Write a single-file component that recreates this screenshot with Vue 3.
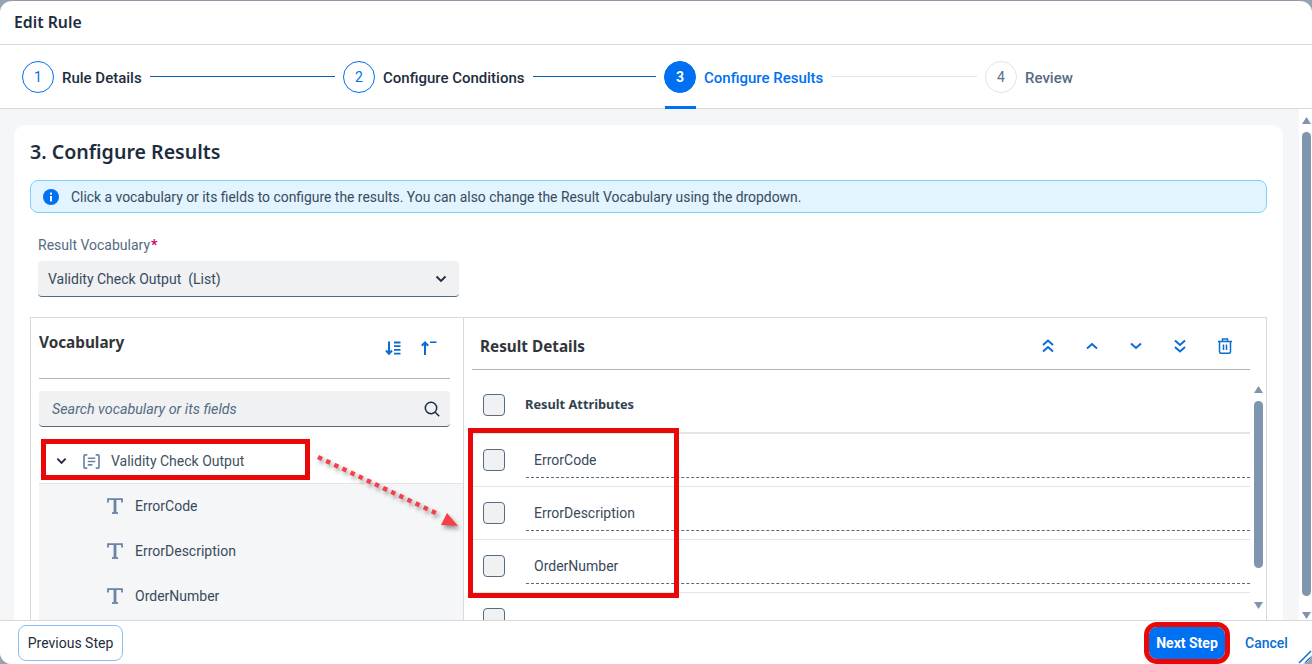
<script setup>
const steps = [
  { n: 1, label: 'Rule Details', state: 'done' },
  { n: 2, label: 'Configure Conditions', state: 'done' },
  { n: 3, label: 'Configure Results', state: 'active' },
  { n: 4, label: 'Review', state: 'todo' },
]
const fields = ['ErrorCode', 'ErrorDescription', 'OrderNumber']
</script>

<template>
  <div class="dialog">
    <header class="title-bar">Edit Rule</header>

    <nav class="stepper">
      <div v-for="s in steps" :key="s.n" class="step" :class="s.state">
        <span class="circle">{{ s.n }}</span>
        <span class="step-label">{{ s.label }}</span>
        <span v-if="s.n < 4" class="step-line"></span>
      </div>
    </nav>

    <div class="body">
      <main class="scroller">
        <section class="card">
          <h2 class="card-title">3. Configure Results</h2>
          <div class="strip">
            <svg class="strip-icon" viewBox="0 0 16 16" width="16" height="16">
              <circle cx="8" cy="8" r="8" fill="#0070f2" />
              <rect x="7" y="7" width="2" height="5.4" fill="#fff" />
              <rect x="7" y="3.6" width="2" height="2" fill="#fff" />
            </svg>
            Click a vocabulary or its fields to configure the results. You can also change the Result Vocabulary using the dropdown.
          </div>

          <label class="field-label">Result Vocabulary<span class="req">*</span></label>
          <div class="select">
            <span class="select-text">Validity Check Output&nbsp; (List)</span>
            <svg viewBox="0 0 12 8" width="12" height="8"><path d="M1.5 1.5 6 6l4.5-4.5" fill="none" stroke="#1d2d3e" stroke-width="1.8" /></svg>
          </div>

          <div class="panel">
            <div class="vocab">
              <div class="vocab-head">
                <span class="head-title">Vocabulary</span>
                <div class="vocab-tools">
                  <svg viewBox="0 0 16 16" width="16" height="16" fill="none" stroke="#0a6ed1" stroke-width="1.8">
                    <path d="M4 1.5v12M1 10.5l3 3.2 3-3.2" stroke-width="2" />
                    <path d="M9 2.5h6.5M9 6.2h6.5M9 9.9h6.5M9 13.6h6.5" />
                  </svg>
                  <svg viewBox="0 0 18 16" width="18" height="16" fill="none" stroke="#0a6ed1" stroke-width="1.6">
                    <path d="M5 15V2.5M1.8 5.8 5 2.5l3.2 3.3" stroke-width="2" />
                    <path d="M10 2.200h6.500" />
                  </svg>
                </div>
              </div>
              <div class="search">
                <span class="search-text">Search vocabulary or its fields</span>
                <svg viewBox="0 0 16 16" width="16" height="16" fill="none" stroke="#1d2d3e" stroke-width="1.5">
                  <circle cx="7" cy="7" r="5.7" /><path d="m11.2 11.2 4 4" />
                </svg>
              </div>
              <div class="tree-root">
                <svg class="tree-chevron" viewBox="0 0 12 8" width="11" height="8"><path d="M1.5 1.5 6 6l4.5-4.5" fill="none" stroke="#1d2d3e" stroke-width="2" /></svg>
                <svg class="tree-doc" viewBox="0 0 18 16" width="17" height="15" fill="none" stroke="#6a84a3" stroke-width="1.8">
                  <path d="M4.5 1H2Q1 1 1 2v12q0 1 1 1h2.5M13.500 1H16q1 0 1 1v12q0 1-1 1h-2.500" />
                  <path d="M5 4.500h8M5 8h8M5 11.500h5" />
                </svg>
                Validity Check Output
              </div>
              <ul class="tree-list">
                <li v-for="f in fields" :key="f" class="tree-item">
                  <svg viewBox="0 0 16 16" width="16" height="16" fill="none" stroke="#6a84a3">
                    <path d="M1 4.500V1.200h14V4.500" stroke-width="1.800" />
                    <path d="M8 1.200v13.500" stroke-width="2.800" />
                    <path d="M5 15h6" stroke-width="1.800" />
                  </svg>
                  {{ f }}
                </li>
              </ul>
            </div>

            <div class="result">
              <div class="result-head">
                <span class="head-title">Result Details</span>
                <div class="result-tools">
                  <svg viewBox="0 0 14 16" width="14" height="16"><path d="M2 7l5-4.500L12 7M2 13.500 7 9l5 4.500" /></svg>
                  <svg viewBox="0 0 14 16" width="14" height="16"><path d="M2 10.500 7 6l5 4.500" /></svg>
                  <svg viewBox="0 0 14 16" width="14" height="16"><path d="M2 5.500 7 10l5-4.500" /></svg>
                  <svg viewBox="0 0 14 16" width="14" height="16"><path d="M2 2.500 7 7l5-4.500M2 9l5 4.500L12 9" /></svg>
                  <svg viewBox="0 0 16 16" width="16" height="16" class="trash">
                    <path d="M1 3.500h14M5.500 3.300V1h5v2.300" />
                    <path d="M2.500 3.500v10.200q0 1.500 1.500 1.500h8q1.500 0 1.500-1.500V3.500" />
                    <path d="M6.500 6.500v5.500M9.500 6.500v5.500" />
                  </svg>
                </div>
              </div>
              <div class="result-body">
                <div class="table">
                  <div class="table-head">
                    <span class="check"></span>
                    <span class="attr-title">Result Attributes</span>
                  </div>
                  <div v-for="f in fields" :key="f" class="table-row">
                    <span class="check"></span>
                    <span class="attr-name">{{ f }}</span>
                  </div>
                  <div class="table-row"><span class="check"></span></div>
                </div>
                <div class="inner-scroll">
                  <span class="arrow-up"></span>
                  <span class="inner-thumb"></span>
                  <span class="arrow-down"></span>
                </div>
              </div>
            </div>
          </div>
        </section>
      </main>
      <div class="page-scroll">
        <span class="arrow-up"></span>
        <span class="page-thumb"></span>
        <span class="arrow-down"></span>
      </div>
    </div>

    <footer class="footer">
      <button class="btn ghost">Previous Step</button>
      <button class="btn primary">Next Step</button>
      <button class="btn link">Cancel</button>
      <svg class="resize" viewBox="0 0 14 14" width="14" height="14" fill="none" stroke="#0a6ed1" stroke-width="1.500">
        <path d="M1 13 13 1M7 13l6-6" />
      </svg>
    </footer>

    <div class="mark mark-tree"></div>
    <div class="mark mark-fields"></div>
    <svg class="mark-arrow" viewBox="0 0 150 80" width="150" height="80">
      <path d="M2 2 124 60" fill="none" stroke="#f5404a" stroke-width="4.500" stroke-dasharray="4.500 4.500" />
      <path d="M131 58 142 71 125 70Z" fill="#f5404a" />
    </svg>
  </div>
</template>

<style>
html, body { margin: 0; background: #98a3b0; }
</style>

<style scoped>
* { box-sizing: border-box; }

.dialog {
  position: relative;
  display: flex;
  flex-direction: column;
  width: 1312px;
  height: 664px;
  overflow: hidden;
  background: #fff;
  border-top: 1px solid #8d99a6;
  border-radius: 12px;
  font-family: Roboto, "Noto Sans", sans-serif;
  font-size: 14px;
  color: #1d2d3e;
}

.title-bar {
  flex: none;
  height: 44px;
  padding-left: 14px;
  line-height: 42px;
  font-family: "Noto Sans", sans-serif;
  font-size: 15.8px;
  font-weight: 600;
  border-bottom: 1px solid #d9d9d9;
}

.stepper {
  flex: none;
  display: grid;
  grid-template-columns: repeat(4, 321px);
  height: 64px;
  padding: 16px 0 0 22px;
  border-bottom: 1px solid #d9d9d9;
}
.step {
  position: relative;
  display: flex;
  align-items: center;
  gap: 8px;
  height: 32px;
  padding-right: 8px;
  font-size: 15px;
  font-weight: 500;
}
.circle {
  flex: none;
  width: 32px;
  height: 32px;
  border: 1px solid #0070f2;
  border-radius: 50%;
  line-height: 30px;
  text-align: center;
  font-size: 14px;
  font-weight: 400;
  color: #0070f2;
}
.step-label { padding-top: 2px; }
.step-line {
  flex: 1;
  height: 1px;
  margin-top: -2px;
  background: #0a5fb4;
}
.active .circle {
  background: #0070f2;
  color: #fff;
  font-weight: 700;
}
.active .step-label { color: #0070f2; }
.active .step-line { background: #e2e4e6; }
.active::after {
  content: "";
  position: absolute;
  left: 1px;
  top: 45px;
  width: 31px;
  height: 3px;
  background: #0070f2;
}
.todo .circle {
  border-color: #e2e4e6;
  color: #5b738b;
}
.todo .step-label { color: #556b82; }

.body {
  flex: 1;
  display: flex;
  min-height: 0;
  overflow: hidden;
  background: #f5f6f7;
}
.scroller {
  flex: none;
  width: 1299px;
  padding: 16px 0 0 14px;
}
.card {
  width: 1269px;
  height: 600px;
  padding: 15px 16px 0;
  background: #fff;
  border-radius: 12px;
}
.card-title {
  margin: 0;
  font-family: "Noto Sans", sans-serif;
  font-size: 19.6px;
  line-height: 24px;
  font-weight: 600;
}
.strip {
  display: flex;
  align-items: center;
  gap: 12px;
  height: 33px;
  margin-top: 16px;
  padding-left: 12px;
  background: #e1f4ff;
  border: 1px solid #7fd0fb;
  border-radius: 8px;
  font-size: 13.9px;
  color: #3a4a5c;
}
.strip-icon { flex: none; }
.field-label {
  display: block;
  margin: 24px 0 0 8px;
  line-height: 16px;
  color: #556b82;
}
.req { color: #d4006f; font-weight: 700; margin-left: 1px; }
.select {
  display: flex;
  align-items: center;
  justify-content: space-between;
  width: 421px;
  height: 36px;
  margin: 8px 0 0 8px;
  padding: 0 12px 0 10px;
  background: #eff1f2;
  border-bottom: 1px solid #556b82;
  border-radius: 4px;
}
.select-text { color: #3a4a5c; }

.panel {
  display: flex;
  height: 340px;
  margin-top: 20px;
  border: 1px solid #d9d9d9;
}
.head-title {
  font-family: "Noto Sans", sans-serif;
  font-size: 15.3px;
  font-weight: 700;
  color: #32363a;
}

.vocab {
  flex: none;
  width: 433px;
  padding-left: 8px;
  border-right: 1px solid #d9d9d9;
}
.vocab-head {
  display: flex;
  justify-content: space-between;
  height: 61px;
  margin-right: 13px;
  padding-top: 14px;
  border-bottom: 1px solid #adb5bd;
}
.vocab-tools {
  display: flex;
  gap: 19px;
  padding: 8px 12px 0 0;
}
.search {
  display: flex;
  align-items: center;
  justify-content: space-between;
  height: 36px;
  margin: 12px 13px 0 0;
  padding: 0 10px 0 13px;
  background: #eff1f2;
  border-bottom: 1px solid #556b82;
  border-radius: 4px;
}
.search-text { font-size: 14.3px; font-style: italic; color: #556b82; }
.tree-root {
  display: flex;
  align-items: center;
  height: 45px;
  margin-top: 12px;
  padding-left: 17px;
  border-bottom: 1px solid #e5e5e5;
  color: #3f5161;
}
.tree-doc { margin: 0 11px 0 16px; }
.tree-list {
  margin: 0;
  padding: 0;
  list-style: none;
  background: #f5f6f7;
  height: 200px;
}
.tree-item {
  display: flex;
  align-items: center;
  gap: 12px;
  height: 45px;
  padding: 0 0 2px 68px;
  color: #3a4a5c;
}

.result {
  flex: 1;
  min-width: 0;
  padding-left: 8px;
}
.result-head {
  display: flex;
  justify-content: space-between;
  align-items: center;
  width: 778px;
  height: 52px;
  padding: 5px 17px 0 8px;
  border-bottom: 1px solid #adb5bd;
}
.result-tools {
  display: flex;
  align-items: center;
  gap: 30px;
}
.result-tools svg {
  fill: none;
  stroke: #0a6ed1;
  stroke-width: 2;
}
.result-tools .trash { stroke-width: 1.500; }
.result-body { display: flex; }
.table { flex: none; width: 778px; }
.table-head {
  display: flex;
  align-items: center;
  gap: 20px;
  height: 64px;
  padding: 8px 0 0 11px;
  border-bottom: 2px solid #e5e5e5;
}
.attr-title {
  margin-bottom: 2px;
  font-family: "Noto Sans", sans-serif;
  font-size: 12.8px;
  font-weight: 700;
  color: #32424f;
}
.table-row {
  display: flex;
  align-items: flex-start;
  gap: 21px;
  height: 53px;
  padding: 15px 0 0 11px;
  border-bottom: 1px solid #e5e5e5;
}
.check {
  flex: none;
  width: 22px;
  height: 22px;
  background: #eff1f2;
  border: 1px solid #556b82;
  border-radius: 4px;
}
.attr-name {
  flex: 1;
  height: 35px;
  margin-top: -6px;
  padding-left: 8px;
  line-height: 35px;
  border-bottom: 1px dashed #556b82;
  color: #3a4a5c;
}
.inner-scroll {
  display: flex;
  flex-direction: column;
  align-items: center;
  width: 9px;
  margin-left: 4px;
  padding-top: 16px;
}
.inner-thumb {
  width: 9px;
  height: 167px;
  margin: 8px 0 34px;
  background: #7f95ad;
  border-radius: 5px;
}
.arrow-up, .arrow-down {
  flex: none;
  width: 9px;
  height: 7px;
  background: #7f95ad;
}
.arrow-up { clip-path: polygon(50% 0, 100% 100%, 0 100%); }
.arrow-down { clip-path: polygon(0 0, 100% 0, 50% 100%); }

.page-scroll {
  flex: none;
  display: flex;
  flex-direction: column;
  align-items: center;
  width: 13px;
  padding: 8px 1px 0 3px;
  background: #fff;
}
.page-thumb {
  flex: none;
  width: 9px;
  height: 464px;
  margin: 8px 0 16px;
  background: #7f95ad;
  border-radius: 5px;
}

.footer {
  position: relative;
  flex: none;
  display: flex;
  align-items: center;
  height: 44px;
  padding: 0 24px 0 18px;
  border-top: 1px solid #d9d9d9;
  background: #fff;
}
.btn {
  height: 36px;
  font: inherit;
  border-radius: 8px;
  cursor: pointer;
}
.ghost {
  width: 105px;
  margin-right: auto;
  background: #fff;
  border: 1px solid #8cbcf0;
  color: #1d2d3e;
}
.primary {
  width: 76px;
  height: 32px;
  padding: 0;
  background: #0070f2;
  border: 0;
  color: #fff;
  font-weight: 700;
  outline: 5px solid #e80808;
}
.link {
  width: 43px;
  margin-left: 20px;
  padding: 0;
  background: none;
  border: 0;
  color: #0a6ed1;
  font-weight: 500;
}
.resize {
  position: absolute;
  right: 0;
  bottom: 0;
}

.mark {
  position: absolute;
  border: 5px solid #e80808;
}
.mark-tree { left: 41px; top: 438px; width: 269px; height: 41px; }
.mark-fields { left: 468px; top: 427px; width: 211px; height: 170px; }
.mark-arrow {
  position: absolute;
  left: 316px;
  top: 454px;
  overflow: visible;
  filter: drop-shadow(2px 3px 2px rgba(0, 0, 0, .4));
}
</style>
